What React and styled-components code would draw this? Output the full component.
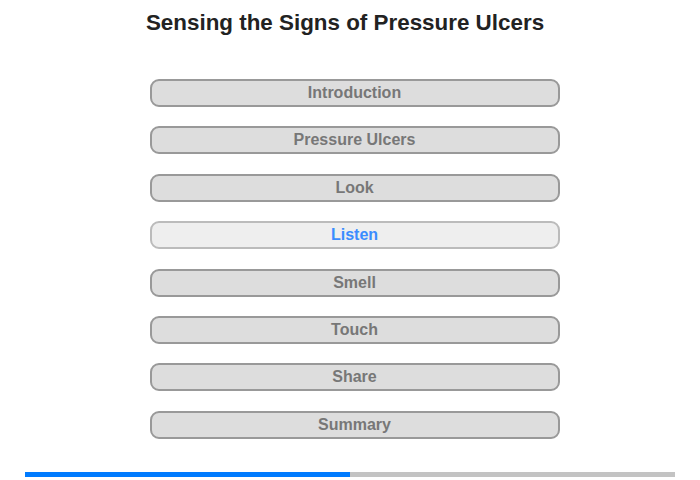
import React from "react";
import styled, { createGlobalStyle } from "styled-components";

const GlobalStyle = createGlobalStyle`
  body {
    margin: 0;
    background: #fff;
    font-family: "Liberation Sans", Arial, sans-serif;
  }
`;

const topics = [
  "Introduction",
  "Pressure Ulcers",
  "Look",
  "Listen",
  "Smell",
  "Touch",
  "Share",
  "Summary",
];

const App = () => {
  const current = 3;
  const progress = 50;
  return (
    <>
      <GlobalStyle />
      <Page>
        <Title>Sensing the Signs of Pressure Ulcers</Title>
        <Menu>
          {topics.map((t, i) => (
            <MenuButton key={t} $active={i === current}>
              {t}
            </MenuButton>
          ))}
        </Menu>
        <Track>
          <Fill style={{ width: `${progress}%` }} />
        </Track>
      </Page>
    </>
  );
};

export default App;

const Page = styled.div`
  width: 700px;
  height: 480px;
  display: flex;
  flex-direction: column;
  align-items: center;
  box-sizing: border-box;
  padding-top: 11px;
`;

const Title = styled.h1`
  margin: 0 0 0 -10px;
  font-size: 22.4px;
  font-weight: bold;
  color: #222;
  line-height: 24px;
`;

const Menu = styled.div`
  display: flex;
  flex-direction: column;
  gap: 19.4px;
  margin-top: 44px;
  margin-left: 9px;
`;

const MenuButton = styled.div`
  width: 410px;
  height: 28px;
  box-sizing: border-box;
  border: 2px solid ${(p) => (p.$active ? "#bbb" : "#999")};
  border-radius: 9px;
  background: ${(p) => (p.$active ? "#eee" : "#ddd")};
  color: ${(p) => (p.$active ? "#3a8cff" : "#777")};
  font-size: 16px;
  font-weight: bold;
  display: flex;
  align-items: center;
  justify-content: center;
`;

const Track = styled.div`
  width: 650px;
  height: 5px;
  background: #c3c3c3;
  margin-top: 33px;
`;

const Fill = styled.div`
  height: 100%;
  background: #007bff;
`;
